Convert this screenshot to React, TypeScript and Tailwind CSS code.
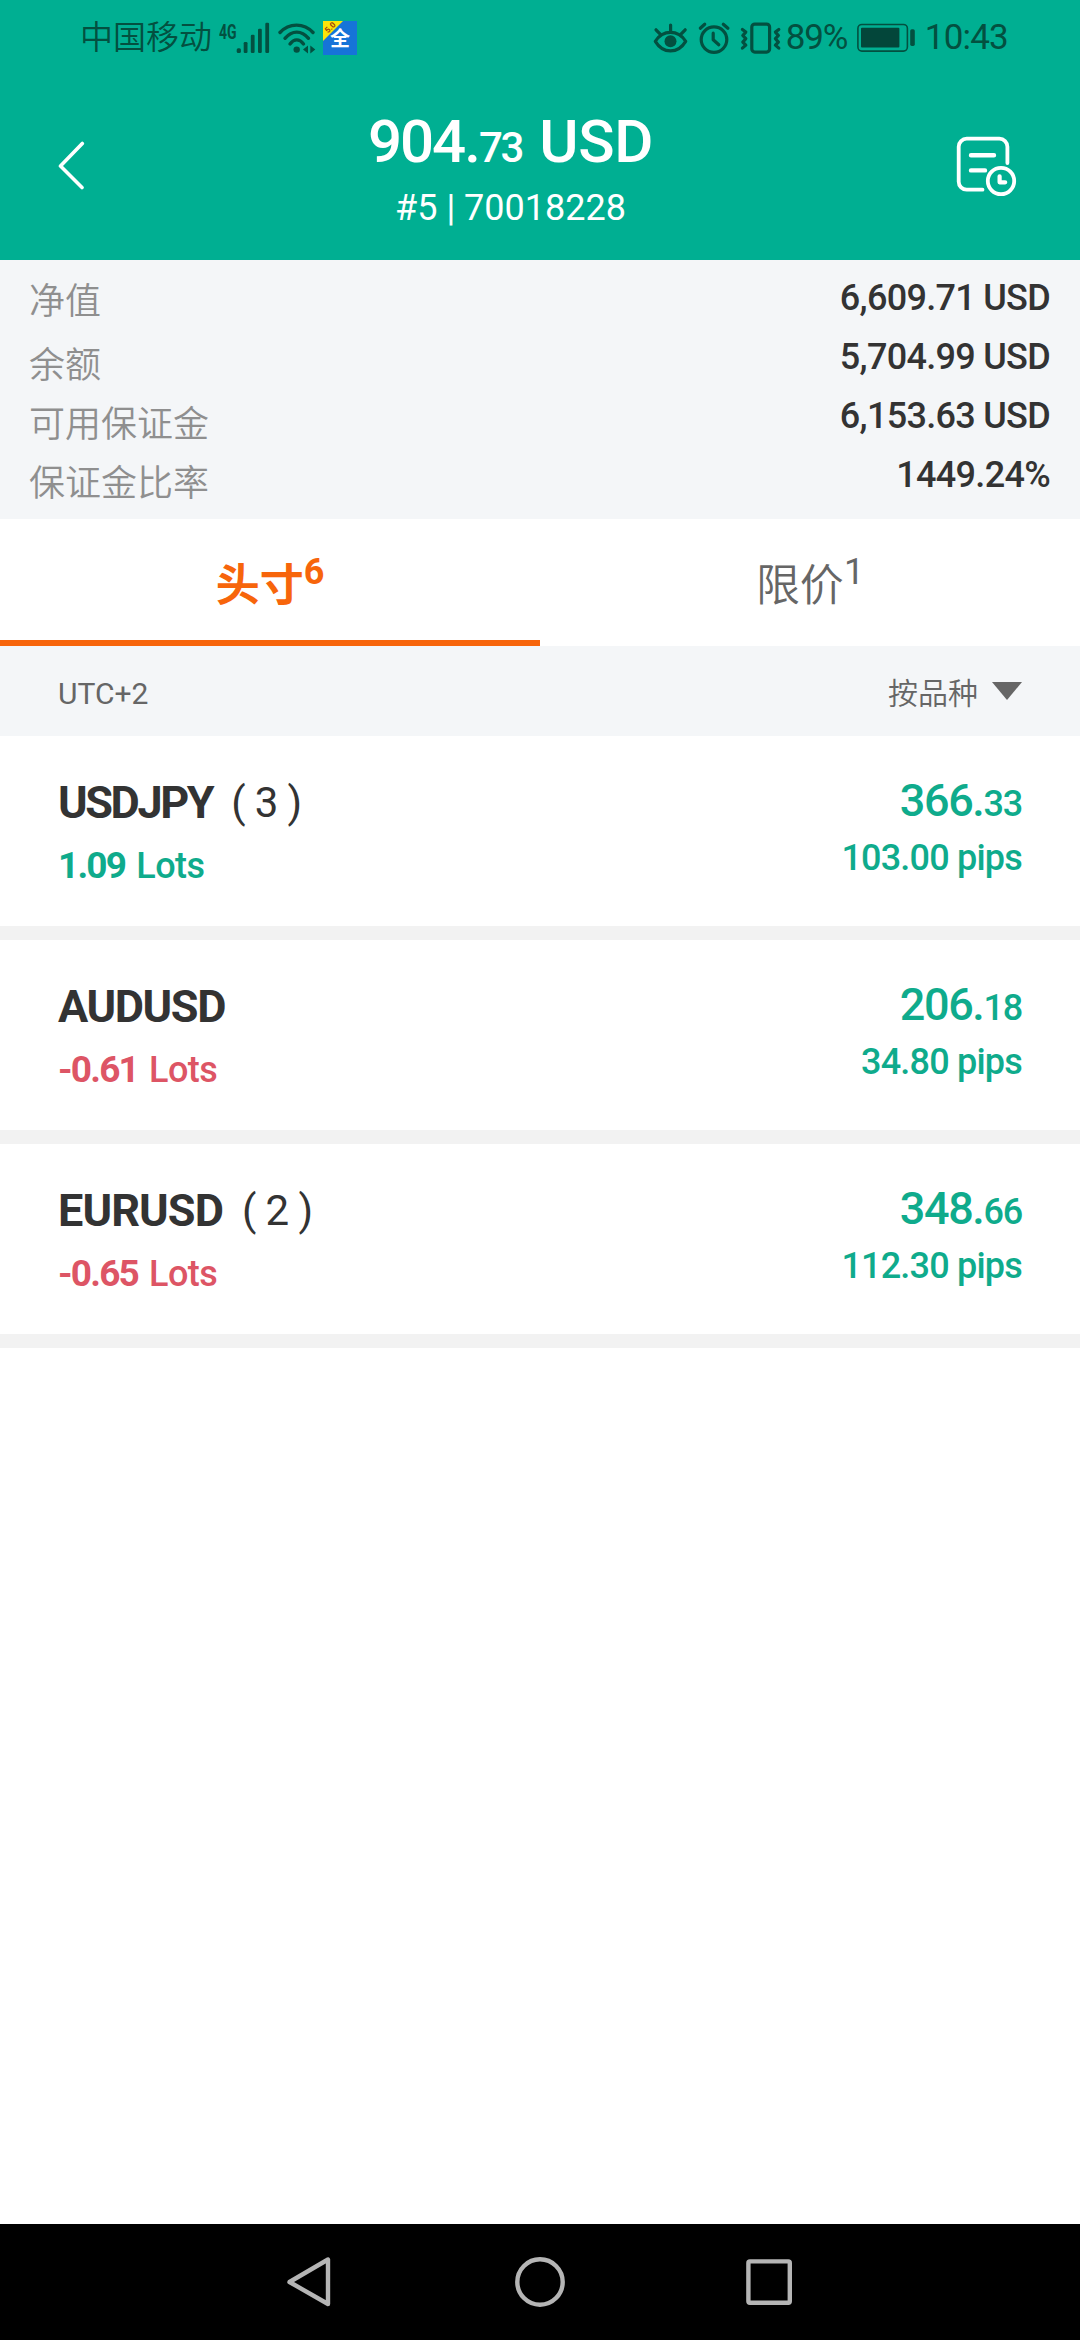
const summary = [
  { label: "净值", value: "6,609.71 USD", labelClass: "pt-[2px]" },
  { label: "余额", value: "5,704.99 USD", labelClass: "pt-[7px]" },
  { label: "可用保证金", value: "6,153.63 USD", labelClass: "pt-[7px]" },
  { label: "保证金比率", value: "1449.24%", labelClass: "pt-[7px]" },
];

const positions = [
  {
    symbol: "USDJPY",
    symbolClass: "tracking-[-2.4px]",
    count: 3,
    lots: "1.09",
    profit: "366.",
    cents: "33",
    pips: "103.00 pips",
  },
  {
    symbol: "AUDUSD",
    symbolClass: "tracking-[-1.4px]",
    lots: "-0.61",
    profit: "206.",
    cents: "18",
    pips: "34.80 pips",
  },
  {
    symbol: "EURUSD",
    symbolClass: "tracking-[-0.9px]",
    count: 2,
    lots: "-0.65",
    profit: "348.",
    cents: "66",
    pips: "112.30 pips",
  },
];

function StatusBar() {
  return (
    <div className="flex h-[75px] items-center justify-between pl-[80px] pr-[72px] text-[#035040]">
      <div className="flex h-9 items-center">
        <span className="text-[33px] leading-9 font-[350]">中国移动</span>
        <span className="ml-[7px] h-9 w-[17px]">
          <span className="block w-6 origin-left scale-x-[0.7] text-[20px] leading-[24px] font-bold">
            4G
          </span>
        </span>
        <svg width="34" height="36" viewBox="0 0 34 36" fill="currentColor">
          <rect x="0.7" y="28.2" width="4.2" height="4.8" rx="1.5" />
          <rect x="7.7" y="22" width="3.8" height="11" rx="1.2" />
          <rect x="14.8" y="14.7" width="3.8" height="18.3" rx="1.2" />
          <rect x="22" y="8.7" width="3.8" height="24.3" rx="1.2" />
          <rect x="29.3" y="2.7" width="3.8" height="30.3" rx="1.2" />
        </svg>
        <svg
          className="ml-2"
          width="40"
          height="36"
          viewBox="0 0 40 36"
          fill="none"
          stroke="currentColor"
          strokeWidth="3.4"
          strokeLinecap="round"
        >
          <path d="M2 12.5C11 2.6 26 2.6 35 12.5" />
          <path d="M7 18.3C14 10 23.5 10 30.5 18.3" />
          <path d="M12 24C16 18.5 21.5 18.5 25.5 24" />
          <circle cx="18.7" cy="29.6" r="3.2" fill="currentColor" stroke="none" />
          <path d="M30 25.5v8l-5-4zM32.3 25.5v8l5-4z" fill="currentColor" stroke="none" />
        </svg>
        <div className="relative ml-[5px] h-[34px] w-[34px] bg-[#1674d8]">
          <svg className="absolute top-0 left-0" width="20" height="20" viewBox="0 0 20 20">
            <path d="M0 0h20L0 20z" fill="#fbe40a" />
          </svg>
          <span className="absolute top-[2px] left-[2px] -rotate-45 text-[8px] leading-[10px] font-bold text-[#9a3a10]">
            5.0
          </span>
          <span className="absolute top-[7px] left-[7px] text-[20px] leading-[22px] font-bold text-white">
            全
          </span>
        </div>
      </div>

      <div className="flex h-9 items-center">
        <svg
          width="38"
          height="36"
          viewBox="0 0 38 36"
          fill="none"
          stroke="currentColor"
          strokeWidth="3.2"
          strokeLinecap="round"
        >
          <path d="M3.3 21.3C11 9.5 26 9.5 33.7 21.3C26 34 11 34 3.3 21.3Z" strokeLinejoin="round" />
          <circle cx="18.5" cy="21.3" r="6" fill="currentColor" stroke="none" />
          <path d="M18.6 5v7M4 9.8l4.2 4.4M33.2 9.8L29 14.2" />
        </svg>
        <svg
          className="ml-2"
          width="33"
          height="36"
          viewBox="0 0 33 36"
          fill="none"
          stroke="currentColor"
          strokeWidth="3.2"
          strokeLinecap="round"
        >
          <circle cx="16" cy="19.6" r="12.8" />
          <path d="M2.3 8.2L6.7 4.2M25.3 4.2L29.9 8.2" />
          <path d="M15.2 13.2v6.6l5.6 5" strokeLinejoin="round" />
        </svg>
        <svg
          className="ml-2"
          width="44"
          height="36"
          viewBox="0 0 44 36"
          fill="none"
          stroke="currentColor"
          strokeWidth="3.2"
          strokeLinejoin="round"
          strokeLinecap="round"
        >
          <rect x="12.8" y="4.1" width="17.8" height="28" rx="3" />
          <path d="M3.4 9.5l3.4 2.6-3 3.4 3 3.2-3 3.4 3 3-3.4 3" />
          <path d="M39.8 9.5l-3.4 2.6 3 3.4-3 3.2 3 3.4-3 3 3.4 3" />
        </svg>
        <span className="ml-[3px] w-[71px] text-[35px] leading-9 tracking-[-1.2px]">89%</span>
        <svg width="60" height="30" viewBox="0 0 60 30" fill="currentColor">
          <rect
            x="0.9"
            y="1.5"
            width="49.5"
            height="26.6"
            rx="4"
            fill="none"
            stroke="currentColor"
            strokeWidth="1.6"
          />
          <rect x="4" y="4.8" width="38.4" height="19.6" rx="1" fill="#03463a" />
          <rect x="53.2" y="6.3" width="4.6" height="16.6" rx="1.6" />
        </svg>
        <span className="ml-[8px] text-[35px] leading-9 tracking-[-0.8px]">10:43</span>
      </div>
    </div>
  );
}

function Header() {
  return (
    <header className="h-[260px] bg-[#00af92]">
      <StatusBar />
      <div className="flex items-start pt-9 text-white">
        <button className="w-[120px] pt-[30px] pl-[56px]">
          <svg
            width="30"
            height="50"
            viewBox="0 0 30 50"
            fill="none"
            stroke="currentColor"
            strokeWidth="3.6"
            strokeLinecap="round"
            strokeLinejoin="round"
          >
            <path d="M26.3 2.5L4.5 25L26 46.5" />
          </svg>
        </button>
        <div className="flex flex-1 flex-col items-center">
          <h1 className="flex h-[60px] items-baseline pt-px text-[60px] leading-[60px] font-medium whitespace-pre">
            <span className="tracking-[-2px]">904.</span>
            <span className="text-[42px] leading-[60px] tracking-[-2.2px]">73</span>
            <span className="ml-[17px] tracking-[-0.3px]">USD</span>
          </h1>
          <p className="mt-[13px] text-[36px] leading-[48px]">#5 | 70018228</p>
        </div>
        <button className="w-[179px] pt-[25px] pl-[55px]">
          <svg
            width="62"
            height="62"
            viewBox="0 0 62 62"
            fill="none"
            stroke="currentColor"
            strokeWidth="3.8"
            strokeLinecap="round"
            strokeLinejoin="round"
          >
            <path d="M51.4 27V10.7a8 8 0 0 0-8-8H10.7a8 8 0 0 0-8 8v35a8 8 0 0 0 8 8H26.5" />
            <path d="M15 19.3h23M15 34.4h14" strokeWidth="4.4" />
            <circle cx="45" cy="45" r="13.2" />
            <path d="M43.6 40.3v6h5.6" strokeWidth="4.2" />
          </svg>
        </button>
      </div>
    </header>
  );
}

export default function App() {
  return (
    <div className="flex h-[2340px] w-[1080px] flex-col bg-white font-['Roboto','Noto_Sans_CJK_SC',sans-serif] text-[#333333]">
      <Header />

      <section className="h-[259px] bg-[#f4f6f8] pt-[8px] pr-[30px] pl-[29px]">
        {summary.map((item) => (
          <div key={item.label} className="flex h-[59px] justify-between">
            <span
              className={`${item.labelClass} text-[36px] leading-[64px] font-[350] text-[#8f8f8f]`}
            >
              {item.label}
            </span>
            <span className="pt-px text-[36px] leading-[59px] font-medium tracking-[-0.7px]">
              {item.value}
            </span>
          </div>
        ))}
      </section>

      <nav className="flex h-[127px]">
        <div className="flex w-1/2 justify-center border-b-[6px] border-[#f7650b] font-bold text-[#f7650b]">
          <span className="pt-[35px] text-[44px] leading-[64px]">头寸</span>
          <span className="pt-[35px] text-[36px] leading-[36px]">6</span>
        </div>
        <div className="flex w-1/2 justify-center text-[#666666]">
          <span className="pt-[35px] text-[44px] leading-[64px] font-[350]">限价</span>
          <span className="pt-[35px] text-[36px] leading-[36px]">1</span>
        </div>
      </nav>

      <div className="flex h-[90px] items-center justify-between bg-[#f4f6f8] pr-[58px] pl-[58px] text-[30px] leading-[30px] text-[#666666]">
        <span className="pt-[5px]">UTC+2</span>
        <div className="flex items-center">
          <span className="pt-[5px] font-[350]">按品种</span>
          <svg className="ml-[14px]" width="30" height="18" viewBox="0 0 30 18">
            <path d="M0 0h30L15 18z" fill="#666666" />
          </svg>
        </div>
      </div>

      <main className="flex-1">
        {positions.map((item) => (
          <div
            key={item.symbol}
            className="flex h-[204px] justify-between border-b-[14px] border-[#f2f2f2] pr-[58px] pl-[58px]"
          >
            <div className="pt-[37px]">
              <div className="flex text-[45px] leading-[60px]">
                <span className={`font-bold ${item.symbolClass}`}>{item.symbol}</span>
                {item.count && (
                  <span className="ml-[19px] flex">
                    <span className="text-[42px]">(</span>
                    <span className="mx-[9px] w-6 text-center text-[42px]">{item.count}</span>
                    <span className="text-[42px]">)</span>
                  </span>
                )}
              </div>
              <div
                className={`mt-[9px] flex leading-[48px] ${
                  item.lots.startsWith("-") ? "text-[#dd5565]" : "text-[#0fab8c]"
                }`}
              >
                <span className="text-[37px] font-bold tracking-[-1.8px]">{item.lots}</span>
                <span className="ml-[11px] text-[36px] font-medium tracking-[-0.5px]">Lots</span>
              </div>
            </div>
            <div className="pt-[35px] text-right font-medium text-[#0fab8c]">
              <div className="text-[45px] leading-[60px] tracking-[-1.4px]">
                {item.profit}
                <span className="text-[36px] tracking-[-1.2px]">{item.cents}</span>
              </div>
              <div className="-mt-px text-[36px] leading-[50px] tracking-[-0.8px]">{item.pips}</div>
            </div>
          </div>
        ))}
      </main>

      <footer className="flex h-[116px] bg-black pt-[31px] pl-[285px]">
        <svg
          width="48"
          height="54"
          viewBox="0 0 48 54"
          fill="none"
          stroke="#b5b5b5"
          strokeWidth="4.4"
          strokeLinejoin="round"
        >
          <path d="M43 4.5v44.5L4.5 27z" />
        </svg>
        <svg className="ml-[180px]" width="54" height="54" viewBox="0 0 54 54" fill="none">
          <circle cx="27" cy="27" r="22.7" stroke="#b5b5b5" strokeWidth="4.4" />
        </svg>
        <svg className="ml-[175px]" width="54" height="54" viewBox="0 0 54 54" fill="none">
          <rect
            x="6.4"
            y="6.4"
            width="41.4"
            height="41.4"
            rx="1.5"
            stroke="#b5b5b5"
            strokeWidth="4.4"
          />
        </svg>
      </footer>
    </div>
  );
}
